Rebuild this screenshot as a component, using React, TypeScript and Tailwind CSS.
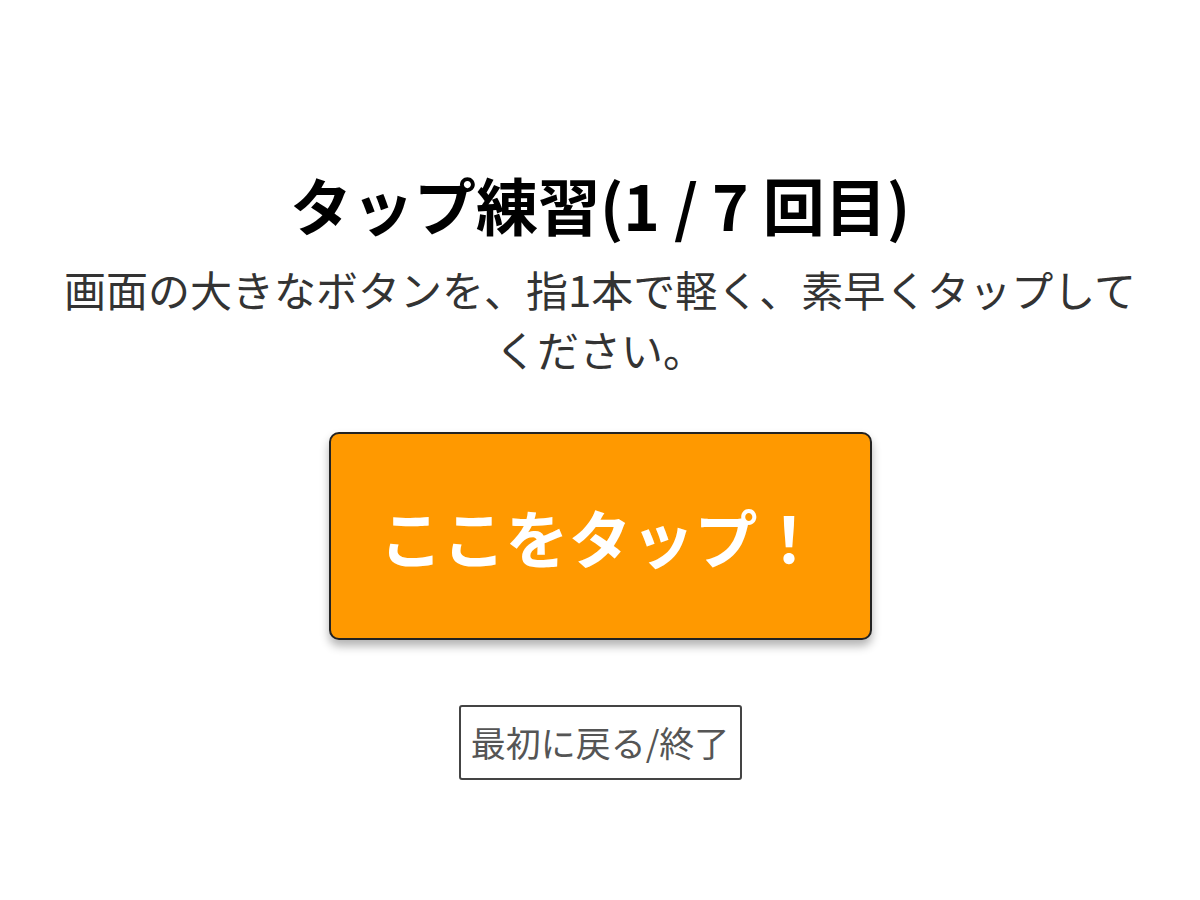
export default function App() {
  return (
    <div
      className="min-h-screen bg-white flex flex-col items-center pt-[168px] text-center"
      style={{ fontFamily: '"Noto Sans CJK JP", "Noto Sans", sans-serif' }}
    >
      <h1 className="text-[62px] leading-[72px] font-bold text-black">
        タップ練習(1 / 7 回目)
      </h1>
      <p className="mt-[19px] max-w-[1090px] text-[42px] leading-[60px] text-[#333]">
        画面の大きなボタンを、指1本で軽く、素早くタップしてください。
      </p>
      <button
        type="button"
        className="mt-[53px] w-[543px] h-[208px] rounded-[10px] border-2 border-[#222] bg-[#ff9900] text-white text-[63px] font-bold shadow-[0_6px_10px_rgba(0,0,0,0.3)]"
      >
        ここをタップ！
      </button>
      <button
        type="button"
        className="mt-[65px] w-[283px] h-[75px] rounded-[3px] border-2 border-[#444] bg-white text-[35px] text-[#555]"
      >
        最初に戻る/終了
      </button>
    </div>
  );
}
